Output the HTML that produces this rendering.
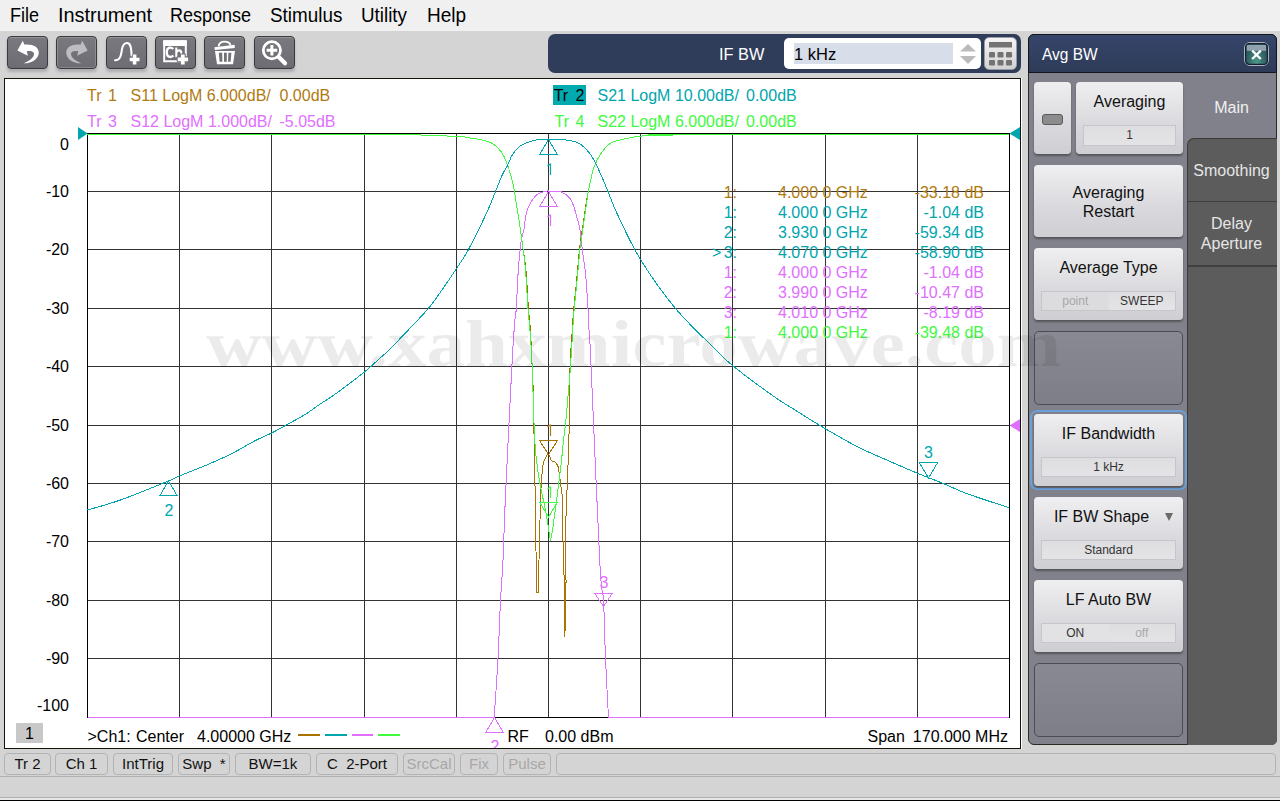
<!DOCTYPE html>
<html><head><meta charset="utf-8"><title>VNA</title>
<style>
*{margin:0;padding:0;box-sizing:border-box;}
html,body{width:1280px;height:801px;overflow:hidden;background:#d4d4d4;font-family:"Liberation Sans",sans-serif;}
.abs{position:absolute;}
#menu{left:0;top:0;width:1280px;height:31px;background:#f0f0f0;}
#menu span{position:absolute;top:4px;font-size:20px;color:#000;transform-origin:0 0;}
#tb{left:0;top:31px;width:1280px;height:47px;background:#d4d4d4;}
.tbtn{position:absolute;top:36px;width:41px;height:33px;border:1px solid #3a3a3e;border-radius:4px;background:linear-gradient(#7a797f,#6d6c72);box-shadow:0 3px 3px rgba(0,0,0,0.18);}
.tbtn svg{position:absolute;left:0;top:0;}
.tbtn{box-shadow:inset 0 1px 0 rgba(255,255,255,0.22), 0 3px 3px rgba(0,0,0,0.18);}
.tbtn.dis{box-shadow:inset 0 0 0 1px rgba(255,255,255,0.18), 0 3px 3px rgba(0,0,0,0.18);}
#ifbw{left:548px;top:34px;width:473px;height:39px;background:#2f3d5b;border-radius:7px;}
#ifbwlbl{left:719px;top:45px;font-size:17px;color:#fff;transform-origin:0 0;transform:scaleX(0.96);}
#ifinput{left:784px;top:38px;width:197px;height:31px;background:#fff;border-radius:5px;}
#ifsel{left:794px;top:43px;width:159px;height:21px;background:#d8dee9;}
#iftxt{left:794px;top:45px;font-size:17px;color:#000;transform-origin:0 0;transform:scaleX(0.97);}
#keypad{left:984px;top:37px;width:33px;height:33px;border-radius:5px;background:linear-gradient(#f4f4f4,#d2d2d4);border:1px solid #9a9aa2;}
#panel{left:4px;top:78px;width:1017px;height:671px;background:#fff;border:1px solid #14140a;box-shadow:1px 0 0 #fff;}
#chart{position:absolute;left:0;top:0;}
#rp{left:1028px;top:34px;width:249px;height:711px;background:#81818b;border:1px solid #2a2a22;border-radius:6px;overflow:hidden;}
#rphead{left:1028px;top:34px;width:249px;height:39px;background:linear-gradient(#36456a,#2e3b58);border:1px solid #15161c;border-radius:6px 6px 0 0;}
#rptitle{left:1042px;top:45px;font-size:17px;color:#fff;transform-origin:0 0;transform:scaleX(0.91);}
#closeb{left:1244px;top:42px;width:25px;height:24px;border:1px solid #aab3c2;border-radius:6px;background:radial-gradient(ellipse at 50% 90%,#4f9a88 0%,#2f6264 55%,#27485a 100%);}
#tabcol{left:1187px;top:138px;width:90px;height:607px;background:#5c5c5c;border-left:1px solid #3b3b35;border-top:1px solid #3b3b35;border-radius:7px 0 5px 0;}
.tab{position:absolute;left:1187px;width:89px;color:#e6e6e6;font-size:16px;text-align:center;}
.sk{position:absolute;left:1034px;width:149px;height:72px;border-radius:4px;background:linear-gradient(#efeff1,#d9d9dd 60%,#cfcfd3);box-shadow:0 2px 2px rgba(0,0,0,0.35);}
.sk .t{position:absolute;left:0;width:100%;top:11px;font-size:16px;text-align:center;color:#111;}
.sk .v{position:absolute;left:7px;top:43px;width:135px;height:20px;border:1px solid #c6c6ca;background:linear-gradient(#dedee0,#e4e4e6);font-size:12px;text-align:center;line-height:19px;color:#333;}
.empty{position:absolute;left:1034px;width:149px;height:74px;border:1px solid #4c4c50;border-radius:5px;background:linear-gradient(#898993,#7e7e88);}
#status .sb{position:absolute;top:753px;height:22px;border:1px solid #b3b3b3;border-radius:4px;font-size:15px;text-align:center;line-height:20px;color:#111;}
#status .dis{color:#a8a8a8;}
#wm{left:206px;top:306px;font-family:"Liberation Serif",serif;font-weight:bold;font-size:66px;color:rgba(0,0,0,0.08);letter-spacing:0px;white-space:nowrap;pointer-events:none;transform-origin:0 0;transform:scaleX(1.168);}
</style></head>
<body>
<div id="menu" class="abs">
<span style="left:10px;transform:scaleX(0.9)">File</span><span style="left:58px;transform:scaleX(0.995)">Instrument</span><span style="left:170.3px;transform:scaleX(0.9)">Response</span><span style="left:270.3px;transform:scaleX(0.943)">Stimulus</span><span style="left:361px;transform:scaleX(0.94)">Utility</span><span style="left:426.5px;transform:scaleX(0.95)">Help</span>
</div>
<div id="tb" class="abs"></div>
<div class="tbtn" style="left:7px"><svg width="39" height="31" viewBox="0 0 39 31"><path d="M14.8,3.8 L9.4,13.4 L19.8,18.8 L18.8,14.3 C23,13.2 26.5,14.5 26,17.5 C25.5,21 21,24.5 15.4,26.2 C21,27.2 30.8,23 30.8,15.5 C30.8,9.5 24,6.5 16.3,7.6 Z" fill="#fff"/></svg></div>
<div class="tbtn dis" style="left:56px"><svg width="39" height="31" viewBox="0 0 39 31"><g transform="translate(40,0) scale(-1,1)"><path d="M14.8,3.8 L9.4,13.4 L19.8,18.8 L18.8,14.3 C23,13.2 26.5,14.5 26,17.5 C25.5,21 21,24.5 15.4,26.2 C21,27.2 30.8,23 30.8,15.5 C30.8,9.5 24,6.5 16.3,7.6 Z" fill="#bdbdc0"/></g></svg></div>
<div class="tbtn" style="left:106px"><svg width="39" height="31" viewBox="0 0 39 31"><path d="M8,23.2 C13,23.5 14,19 15,12 C16,7 17.5,6 20,6 C23,6 24.3,9 24.6,18.5" fill="none" stroke="#fff" stroke-width="2" stroke-linecap="round"/><path d="M27.6,17.4 v10.2 M22.5,22.5 h10.2" stroke="#727177" stroke-width="5.5"/><path d="M27.6,17.6 v9.8 M22.7,22.5 h9.8" stroke="#fff" stroke-width="3.6"/></svg></div>
<div class="tbtn" style="left:155px"><svg width="39" height="31" viewBox="0 0 39 31"><rect x="8.2" y="4.3" width="21.6" height="19.95" fill="none" stroke="#fff" stroke-width="2"/><rect x="7.2" y="3.3" width="23.6" height="5.8" rx="0.8" fill="#fff"/><path d="M17.2,12 C16.5,11 15.5,10.6 14.4,10.6 C12,10.6 10.8,12.6 10.8,15.3 C10.8,18.2 12.2,20 14.5,20 C15.6,20 16.6,19.5 17.4,18.6" fill="none" stroke="#fff" stroke-width="2.3"/><path d="M20.3,10.4 v9.8 M20.3,15.5 C21,13.8 22.2,13.4 23.2,13.4 C24.6,13.4 25.3,14.4 25.3,16 v4.2" fill="none" stroke="#fff" stroke-width="2.1"/><path d="M26.8,16.4 v12.2 M20.8,22.3 h12.2" stroke="#727177" stroke-width="6"/><path d="M26.8,17.4 v10.2 M21.7,22.3 h10.4" stroke="#fff" stroke-width="3.8"/></svg></div>
<div class="tbtn" style="left:204px"><svg width="39" height="31" viewBox="0 0 39 31"><path d="M13.6,9.4 C14,5.5 17,4.6 19.5,4.6 C22.5,4.6 24.8,5.8 25.4,8" fill="none" stroke="#fff" stroke-width="1.9"/><path d="M9.4,10.2 L29.6,7.7 L29.9,10.9 L9.8,13.1 Z" fill="#fff"/><path d="M10,14 h20 l-2,13.2 h-16 z" fill="#fff"/><path d="M13.8,15.8 h3.4 l0.2,9 h-2.8 z M19,15.8 h2.8 v9 h-2.8 z M23.4,15.8 h3 l-0.8,9 h-2.6 z" fill="#727177"/></svg></div>
<div class="tbtn" style="left:254px"><svg width="39" height="31" viewBox="0 0 39 31"><circle cx="16.9" cy="13.3" r="8.6" fill="none" stroke="#fff" stroke-width="2.8"/><path d="M16.9,8 v10.6 M11.6,13.3 h10.6" stroke="#fff" stroke-width="3"/><path d="M24,20.3 L30,26.3" stroke="#fff" stroke-width="4.2" stroke-linecap="round"/></svg></div>

<div id="ifbw" class="abs"></div>
<div id="ifbwlbl" class="abs">IF BW</div>
<div id="ifinput" class="abs"></div>
<div id="ifsel" class="abs"></div>
<div id="iftxt" class="abs">1 kHz</div>
<svg class="abs" style="left:955px;top:40px" width="26" height="28"><polygon points="5,11.5 13,4 21,11.5" fill="#bbb"/><polygon points="5,16 13,24 21,16" fill="#bbb"/></svg>
<div id="keypad" class="abs"><svg width="31" height="31" viewBox="0 0 31 31"><rect x="4" y="4" width="23" height="5.5" fill="#737373"/><rect x="4" y="14" width="6" height="5.5" rx="1.2" fill="#737373"/><rect x="12.5" y="14" width="6" height="5.5" rx="1.2" fill="#737373"/><rect x="21" y="14" width="6" height="5.5" rx="1.2" fill="#737373"/><rect x="4" y="22" width="6" height="5.5" rx="1.2" fill="#737373"/><rect x="12.5" y="22" width="6" height="5.5" rx="1.2" fill="#737373"/><rect x="21" y="22" width="6" height="5.5" rx="1.2" fill="#737373"/></svg></div>

<div id="panel" class="abs"></div>
<svg id="chart" width="1280" height="801" viewBox="0 0 1280 801"><defs><clipPath id="pc"><rect x="5" y="79" width="1015" height="669"/></clipPath></defs><g clip-path="url(#pc)">
<g stroke="#333" stroke-width="1" shape-rendering="crispEdges"><line x1="179.5" y1="133" x2="179.5" y2="718" /><line x1="271.5" y1="133" x2="271.5" y2="718" /><line x1="364.5" y1="133" x2="364.5" y2="718" /><line x1="456.5" y1="133" x2="456.5" y2="718" /><line x1="548.5" y1="133" x2="548.5" y2="718" /><line x1="640.5" y1="133" x2="640.5" y2="718" /><line x1="732.5" y1="133" x2="732.5" y2="718" /><line x1="825.5" y1="133" x2="825.5" y2="718" /><line x1="917.5" y1="133" x2="917.5" y2="718" /><line x1="87" y1="191.5" x2="1010" y2="191.5" /><line x1="87" y1="249.5" x2="1010" y2="249.5" /><line x1="87" y1="308.5" x2="1010" y2="308.5" /><line x1="87" y1="366.5" x2="1010" y2="366.5" /><line x1="87" y1="425.5" x2="1010" y2="425.5" /><line x1="87" y1="483.5" x2="1010" y2="483.5" /><line x1="87" y1="541.5" x2="1010" y2="541.5" /><line x1="87" y1="600.5" x2="1010" y2="600.5" /><line x1="87" y1="658.5" x2="1010" y2="658.5" /></g>
<rect x="87.5" y="133.5" width="922" height="584" fill="none" stroke="#000" stroke-width="1" shape-rendering="crispEdges"/>
<g font-family="Liberation Sans, sans-serif" font-size="16" fill="#000"><text x="69" y="149.5" text-anchor="end">0</text><text x="69" y="197" text-anchor="end">-10</text><text x="69" y="255" text-anchor="end">-20</text><text x="69" y="314" text-anchor="end">-30</text><text x="69" y="372" text-anchor="end">-40</text><text x="69" y="431" text-anchor="end">-50</text><text x="69" y="489" text-anchor="end">-60</text><text x="69" y="547" text-anchor="end">-70</text><text x="69" y="606" text-anchor="end">-80</text><text x="69" y="664" text-anchor="end">-90</text><text x="69" y="710.5" text-anchor="end">-100</text></g>
<g fill="none" stroke-width="1" stroke-linejoin="miter" shape-rendering="crispEdges">
<path d="M87.50,717.50 C155.28,717.50 426.42,717.50 494.20,717.50 C494.83,707.67 496.95,678.00 498.00,658.50 C499.05,639.00 499.67,616.83 500.50,600.50 C501.33,584.17 502.17,578.00 503.00,560.50 C503.83,543.00 503.97,528.83 505.50,495.50 C507.03,462.17 510.57,390.50 512.20,360.50 C513.83,330.50 514.62,324.17 515.30,315.50 C515.98,306.83 515.82,315.83 516.30,308.50 C516.78,301.17 517.55,281.33 518.20,271.50 C518.85,261.67 519.65,254.90 520.20,249.50 C520.75,244.10 520.88,242.47 521.50,239.10 C522.12,235.73 523.10,233.63 523.90,229.30 C524.70,224.97 525.37,217.15 526.30,213.10 C527.23,209.05 527.87,207.98 529.50,205.00 C531.13,202.02 533.65,197.45 536.10,195.20 C538.55,192.95 542.13,192.20 544.20,191.50 C546.27,190.80 547.12,191.00 548.50,191.00 C549.88,191.00 550.33,191.33 552.50,191.50 C554.67,191.67 558.58,190.83 561.50,192.00 C564.42,193.17 568.02,196.25 570.00,198.50 C571.98,200.75 572.33,202.67 573.40,205.50 C574.47,208.33 575.32,211.50 576.40,215.50 C577.48,219.50 578.92,223.83 579.90,229.50 C580.88,235.17 581.37,242.17 582.30,249.50 C583.23,256.83 584.55,263.67 585.50,273.50 C586.45,283.33 587.37,298.17 588.00,308.50 C588.63,318.83 588.83,326.83 589.30,335.50 C589.77,344.17 589.05,322.67 590.80,360.50 C592.55,398.33 597.68,522.50 599.80,562.50 C601.92,602.50 602.55,584.50 603.50,600.50 C604.45,616.50 604.67,639.00 605.50,658.50 C606.33,678.00 608.00,707.67 608.50,717.50 C675.25,717.50 942.25,717.50 1009.00,717.50" stroke="#df6fff"/>
<path d="M87.50,134.50 C136.33,134.50 319.00,134.17 380.50,134.50 C442.00,134.83 441.33,135.88 456.50,136.50 C471.67,137.12 467.00,137.57 471.50,138.20 C476.00,138.83 479.92,139.37 483.50,140.30 C487.08,141.23 490.00,141.82 493.00,143.80 C496.00,145.78 499.08,148.68 501.50,152.20 C503.92,155.72 505.52,159.35 507.50,164.90 C509.48,170.45 511.90,178.82 513.40,185.50 C514.90,192.18 515.42,198.23 516.50,205.00 C517.58,211.77 518.80,218.68 519.90,226.10 C521.00,233.52 522.09,242.20 523.10,249.50 C524.11,256.80 525.06,260.07 525.95,269.90 C526.84,279.73 527.70,298.40 528.45,308.50 C529.20,318.60 529.83,320.83 530.45,330.50 C531.07,340.17 531.63,354.83 532.15,366.50 C532.67,378.17 533.23,388.17 533.55,400.50 C533.88,412.83 533.88,427.17 534.10,440.50 C534.33,453.83 534.67,468.83 534.90,480.50 C535.13,492.17 535.32,498.83 535.50,510.50 C535.68,522.17 535.83,536.83 536.00,550.50 C536.17,564.17 536.42,585.50 536.50,592.50 C536.92,592.50 538.58,592.50 539.00,592.50 C539.00,587.17 538.83,572.50 539.00,560.50 C539.17,548.50 539.75,530.50 540.00,520.50 C540.25,510.50 540.25,507.17 540.50,500.50 C540.75,493.83 541.08,486.33 541.50,480.50 C541.92,474.67 542.33,469.33 543.00,465.50 C543.67,461.67 544.58,459.33 545.50,457.50 C546.42,455.67 547.50,454.00 548.50,454.50 C549.50,455.00 550.33,459.17 551.50,460.50 C552.67,461.83 554.42,461.50 555.50,462.50 C556.58,463.50 557.33,464.33 558.00,466.50 C558.67,468.67 558.92,471.50 559.50,475.50 C560.08,479.50 561.00,486.33 561.50,490.50 C562.00,494.67 562.25,492.17 562.50,500.50 C562.75,508.83 562.72,526.83 563.00,540.50 C563.28,554.17 563.88,566.50 564.20,582.50 C564.52,598.50 564.78,627.50 564.90,636.50 C565.08,627.50 565.90,598.50 566.00,582.50 C566.10,566.50 565.42,554.17 565.50,540.50 C565.58,526.83 566.17,510.50 566.50,500.50 C566.83,490.50 567.17,488.83 567.50,480.50 C567.83,472.17 568.17,461.33 568.50,450.50 C568.83,439.67 569.24,429.50 569.50,415.50 C569.76,401.50 569.59,380.67 570.05,366.50 C570.51,352.33 571.63,340.17 572.25,330.50 C572.87,320.83 573.12,315.83 573.75,308.50 C574.38,301.17 575.10,296.33 576.05,286.50 C577.00,276.67 578.62,257.58 579.45,249.50 C580.28,241.42 579.98,245.33 581.05,238.00 C582.12,230.67 584.64,213.25 585.85,205.50 C587.06,197.75 586.96,197.83 588.30,191.50 C589.64,185.17 591.78,173.83 593.90,167.50 C596.02,161.17 598.18,157.57 601.00,153.50 C603.82,149.43 606.82,145.53 610.80,143.10 C614.78,140.67 619.73,140.08 624.90,138.90 C630.07,137.72 633.95,136.63 641.80,136.00 C649.65,135.37 666.88,135.35 672.00,135.10 C677.12,134.85 616.33,134.60 672.50,134.50 C728.67,134.40 952.92,134.50 1009.00,134.50" stroke="#a97300"/>
<path d="M87.50,134.50 C136.33,134.50 319.00,134.17 380.50,134.50 C442.00,134.83 441.33,135.88 456.50,136.50 C471.67,137.12 467.00,137.57 471.50,138.20 C476.00,138.83 479.92,139.37 483.50,140.30 C487.08,141.23 490.00,141.82 493.00,143.80 C496.00,145.78 499.08,148.68 501.50,152.20 C503.92,155.72 505.52,159.35 507.50,164.90 C509.48,170.45 511.90,178.82 513.40,185.50 C514.90,192.18 515.42,198.23 516.50,205.00 C517.58,211.77 518.80,218.68 519.90,226.10 C521.00,233.52 522.17,242.20 523.10,249.50 C524.03,256.80 524.68,260.07 525.50,269.90 C526.32,279.73 527.25,298.40 528.00,308.50 C528.75,318.60 529.30,320.83 530.00,330.50 C530.70,340.17 531.55,351.50 532.20,366.50 C532.85,381.50 533.35,406.50 533.90,420.50 C534.45,434.50 534.82,442.00 535.50,450.50 C536.18,459.00 537.17,465.50 538.00,471.50 C538.83,477.50 539.25,480.00 540.50,486.50 C541.75,493.00 544.17,503.50 545.50,510.50 C546.83,517.50 547.67,523.50 548.50,528.50 C549.33,533.50 550.17,538.50 550.50,540.50 C550.83,538.83 551.83,534.67 552.50,530.50 C553.17,526.33 553.83,520.50 554.50,515.50 C555.17,510.50 555.83,505.50 556.50,500.50 C557.17,495.50 557.67,492.17 558.50,485.50 C559.33,478.83 560.67,468.00 561.50,460.50 C562.33,453.00 562.77,447.17 563.50,440.50 C564.23,433.83 565.07,428.83 565.90,420.50 C566.73,412.17 567.73,399.50 568.50,390.50 C569.27,381.50 569.80,376.50 570.50,366.50 C571.20,356.50 572.08,340.17 572.70,330.50 C573.32,320.83 573.57,315.83 574.20,308.50 C574.83,301.17 575.55,296.33 576.50,286.50 C577.45,276.67 579.07,257.58 579.90,249.50 C580.73,241.42 580.43,245.33 581.50,238.00 C582.57,230.67 585.17,213.25 586.30,205.50 C587.43,197.75 587.03,197.83 588.30,191.50 C589.57,185.17 591.78,173.83 593.90,167.50 C596.02,161.17 598.18,157.57 601.00,153.50 C603.82,149.43 606.82,145.53 610.80,143.10 C614.78,140.67 619.73,140.08 624.90,138.90 C630.07,137.72 633.95,136.63 641.80,136.00 C649.65,135.37 666.88,135.35 672.00,135.10 C677.12,134.85 616.33,134.60 672.50,134.50 C728.67,134.40 952.92,134.50 1009.00,134.50" stroke="#40fa40"/>
<path d="M87.50,510.00 C93.00,508.33 107.00,504.83 120.50,500.00 C134.00,495.17 158.50,485.08 168.50,481.00 C178.50,476.92 174.33,478.08 180.50,475.50 C186.67,472.92 197.17,469.04 205.50,465.50 C213.83,461.96 222.17,458.42 230.50,454.25 C238.83,450.08 248.62,444.04 255.50,440.50 C262.38,436.96 266.75,435.50 271.75,433.00 C276.75,430.50 279.88,428.62 285.50,425.50 C291.12,422.38 300.08,417.58 305.50,414.25 C310.92,410.92 312.79,409.04 318.00,405.50 C323.21,401.96 328.92,398.67 336.75,393.00 C344.58,387.33 357.88,377.25 365.00,371.50 C372.12,365.75 375.75,361.83 379.50,358.50 C383.25,355.17 382.83,356.10 387.50,351.50 C392.17,346.90 400.77,337.98 407.50,330.90 C414.23,323.82 422.62,315.17 427.90,309.00 C433.18,302.83 434.43,300.65 439.20,293.90 C443.97,287.15 451.62,275.90 456.50,268.50 C461.38,261.10 463.42,258.90 468.50,249.50 C473.58,240.10 482.50,221.77 487.00,212.10 C491.50,202.43 492.92,197.77 495.50,191.50 C498.08,185.23 500.50,178.83 502.50,174.50 C504.50,170.17 505.83,168.83 507.50,165.50 C509.17,162.17 510.50,157.67 512.50,154.50 C514.50,151.33 516.83,148.57 519.50,146.50 C522.17,144.43 525.67,143.18 528.50,142.10 C531.33,141.02 533.17,140.43 536.50,140.00 C539.83,139.57 543.67,139.50 548.50,139.50 C553.33,139.50 560.67,139.50 565.50,140.00 C570.33,140.50 574.17,141.08 577.50,142.50 C580.83,143.92 583.00,146.00 585.50,148.50 C588.00,151.00 590.17,153.67 592.50,157.50 C594.83,161.33 596.92,165.83 599.50,171.50 C602.08,177.17 605.00,184.33 608.00,191.50 C611.00,198.67 612.08,203.17 617.50,214.50 C622.92,225.83 630.83,243.83 640.50,259.50 C650.17,275.17 663.00,293.50 675.50,308.50 C688.00,323.50 706.00,340.00 715.50,349.50 C725.00,359.00 723.00,357.83 732.50,365.50 C742.00,373.17 761.42,387.67 772.50,395.50 C783.58,403.33 791.10,407.50 799.00,412.50 C806.90,417.50 810.17,419.79 819.90,425.50 C829.63,431.21 845.95,440.87 857.40,446.75 C868.85,452.63 878.58,456.38 888.60,460.80 C898.62,465.23 908.38,469.52 917.50,473.30 C926.62,477.08 935.09,480.12 943.30,483.50 C951.51,486.88 955.82,489.57 966.75,493.60 C977.68,497.63 1001.88,505.35 1008.90,507.70" stroke="#00a5ad"/>
</g>
<g fill="none" stroke-width="1" shape-rendering="crispEdges">
<polygon points="168.5,481.0 159.75,495.8 177.25,495.8" stroke="#00a5ad"/>
<polygon points="548.5,139.5 539.75,154.3 557.25,154.3" stroke="#00a5ad"/>
<polygon points="928.5,478.0 919.0,462.0 938.0,462.0" stroke="#00a5ad"/>
<polygon points="548.5,191.5 539.75,206.3 557.25,206.3" stroke="#df6fff"/>
<polygon points="603.5,606.5 594.5,593.0 612.5,593.0" stroke="#df6fff"/>
<polygon points="494.5,717.5 485.75,732.3 503.25,732.3" stroke="#df6fff"/>
<polygon points="548.5,454.5 539.5,440.5 557.5,440.5" stroke="#a97300"/>
<polygon points="548.5,517.0 539.5,502.0 557.5,502.0" stroke="#40fa40"/>
</g>
<polygon points="78,127 87.5,133.5 78,140" fill="#00a5ad"/>
<polygon points="1020,127 1009.5,133.5 1020,140" fill="#00a5ad"/>
<polygon points="1020,419 1009.5,425.5 1020,432" fill="#df6fff"/>
<g font-family="Liberation Sans, sans-serif" font-size="16">
<text x="169" y="515.5" text-anchor="middle" fill="#00a5ad">2</text>
<path d="M550.5,163.5 V175 M547.5,166.0 L550.5,163.8" stroke="#00a5ad" stroke-width="1.2" fill="none"/>
<text x="928.5" y="458" text-anchor="middle" fill="#00a5ad">3</text>
<path d="M550.5,214.5 V226 M547.5,217.0 L550.5,214.8" stroke="#df6fff" stroke-width="1.2" fill="none"/>
<text x="604" y="588" text-anchor="middle" fill="#df6fff">3</text>
<text x="495" y="752" text-anchor="middle" fill="#df6fff">2</text>
<path d="M550.5,424.5 V436 M547.5,427.0 L550.5,424.8" stroke="#b07a10" stroke-width="1.2" fill="none"/>
<path d="M550.5,486.5 V498 M547.5,489.0 L550.5,486.8" stroke="#40fa40" stroke-width="1.2" fill="none"/>
</g>
<g font-family="Liberation Sans, sans-serif" font-size="16"><text x="737" y="197.5" text-anchor="end" fill="#b07a10">1:</text><text x="778" y="197.5" fill="#b07a10">4.000 0 GHz</text><text x="984" y="197.5" text-anchor="end" fill="#b07a10">-33.18 dB</text><text x="737" y="217.5" text-anchor="end" fill="#00a5ad">1:</text><text x="778" y="217.5" fill="#00a5ad">4.000 0 GHz</text><text x="984" y="217.5" text-anchor="end" fill="#00a5ad">-1.04 dB</text><text x="737" y="237.5" text-anchor="end" fill="#00a5ad">2:</text><text x="778" y="237.5" fill="#00a5ad">3.930 0 GHz</text><text x="984" y="237.5" text-anchor="end" fill="#00a5ad">-59.34 dB</text><text x="737" y="257.5" text-anchor="end" fill="#00a5ad">3:</text><text x="778" y="257.5" fill="#00a5ad">4.070 0 GHz</text><text x="984" y="257.5" text-anchor="end" fill="#00a5ad">-58.90 dB</text><text x="737" y="277.5" text-anchor="end" fill="#df6fff">1:</text><text x="778" y="277.5" fill="#df6fff">4.000 0 GHz</text><text x="984" y="277.5" text-anchor="end" fill="#df6fff">-1.04 dB</text><text x="737" y="297.5" text-anchor="end" fill="#df6fff">2:</text><text x="778" y="297.5" fill="#df6fff">3.990 0 GHz</text><text x="984" y="297.5" text-anchor="end" fill="#df6fff">-10.47 dB</text><text x="737" y="317.5" text-anchor="end" fill="#df6fff">3:</text><text x="778" y="317.5" fill="#df6fff">4.010 0 GHz</text><text x="984" y="317.5" text-anchor="end" fill="#df6fff">-8.19 dB</text><text x="737" y="337.5" text-anchor="end" fill="#40fa40">1:</text><text x="778" y="337.5" fill="#40fa40">4.000 0 GHz</text><text x="984" y="337.5" text-anchor="end" fill="#40fa40">-39.48 dB</text><text x="712" y="257.5" fill="#00a5ad">&gt;</text></g>
<g font-family="Liberation Sans, sans-serif" font-size="16">
<text x="87" y="101" fill="#b07a10">Tr</text><text x="108" y="101" fill="#b07a10">1</text><text x="130.5" y="101" fill="#b07a10">S11 LogM 6.000dB/</text><text x="279.5" y="101" fill="#b07a10">0.00dB</text>
<text x="87" y="127" fill="#df6fff">Tr</text><text x="108" y="127" fill="#df6fff">3</text><text x="130.5" y="127" fill="#df6fff">S12 LogM 1.000dB/</text><text x="279.5" y="127" fill="#df6fff">-5.05dB</text>
<rect x="553" y="85" width="33" height="20" fill="#00aaae"/>
<text x="553.7" y="101" fill="#000">Tr</text><text x="575.5" y="101" fill="#000">2</text><text x="597.5" y="101" fill="#00a5ad">S21 LogM 10.00dB/</text><text x="746" y="101" fill="#00a5ad">0.00dB</text>
<text x="554.5" y="127" fill="#40fa40">Tr</text><text x="575.5" y="127" fill="#40fa40">4</text><text x="597.5" y="127" fill="#40fa40">S22 LogM 6.000dB/</text><text x="746" y="127" fill="#40fa40">0.00dB</text>
<rect x="16" y="723" width="27" height="20" fill="#c8c8c8"/>
<text x="29.5" y="739" text-anchor="middle" fill="#000">1</text>
<text x="87.5" y="741.5" fill="#000">&gt;Ch1:</text><text x="136" y="741.5" fill="#000">Center</text><text x="197" y="741.5" fill="#000">4.00000 GHz</text>
<text x="507.5" y="741.5" fill="#000">RF</text><text x="545" y="741.5" fill="#000">0.00 dBm</text>
<text x="867.5" y="742" fill="#000">Span</text><text x="1008" y="742" text-anchor="end" fill="#000">170.000 MHz</text>
</g>
<g stroke-width="2">
<line x1="298" y1="735" x2="320" y2="735" stroke="#a97300"/>
<line x1="325" y1="735" x2="347" y2="735" stroke="#00a5ad"/>
<line x1="352" y1="735" x2="373" y2="735" stroke="#df6fff"/>
<line x1="378" y1="735" x2="400" y2="735" stroke="#40fa40"/>
</g>
</g></svg>

<div id="rp" class="abs"></div>
<div id="tabcol" class="abs"></div>
<div class="tab" style="top:99px;color:#f0f0f0">Main</div>
<div class="abs" style="left:1187px;top:201px;width:90px;height:1px;background:#3e3e3a"></div>
<div class="abs" style="left:1187px;top:265px;width:90px;height:2px;background:#404040"></div>
<div class="tab" style="top:162px">Smoothing</div>
<div class="tab" style="top:214px;line-height:20px">Delay<br>Aperture</div>
<div id="rphead" class="abs"></div>
<div id="rptitle" class="abs">Avg BW</div>
<div id="closeb" class="abs"><svg width="23" height="22" viewBox="0 0 23 22"><rect x="0.6" y="0.6" width="21.8" height="20.8" rx="4" fill="none" stroke="#15202c" stroke-width="1.2"/><rect x="1.8" y="2" width="19.2" height="5.8" fill="#8fa2ae"/><path d="M7.2,7.6 L15.8,16 M15.8,7.6 L7.2,16" stroke="#fff" stroke-width="2.3"/></svg></div>

<div class="sk" style="left:1034px;top:82px;width:37px"><div style="position:absolute;left:8px;top:32px;width:21px;height:11px;border:1px solid #5a5a5a;border-radius:3px;background:#8c8c8c"></div></div>
<div class="sk" style="left:1076px;top:82px;width:107px"><div class="t">Averaging</div><div class="v" style="width:93px;height:21px">1</div></div>
<div class="sk" style="top:165px"><div class="t" style="top:18px;line-height:19px">Averaging<br>Restart</div></div>
<div class="sk" style="top:248px"><div class="t">Average Type</div><div class="v" style="display:flex;padding:0"><span style="flex:1;color:#a8a8a8;background:#dcdcde">point</span><span style="flex:1;color:#333">SWEEP</span></div></div>
<div class="empty" style="top:331px"></div>
<div class="abs" style="left:1030px;top:410px;width:157px;height:80px;border:2px solid #6a9fd8;border-radius:7px"></div>
<div class="sk" style="top:414px"><div class="t">IF Bandwidth</div><div class="v">1 kHz</div></div>
<div class="sk" style="top:497px"><div class="t" style="padding-right:14px">IF BW Shape</div><div class="abs" style="left:131px;top:16px;width:0;height:0;border-left:4.5px solid transparent;border-right:4.5px solid transparent;border-top:8px solid #6a6a6a"></div><div class="v">Standard</div></div>
<div class="sk" style="top:580px"><div class="t">LF Auto BW</div><div class="v" style="display:flex;padding:0"><span style="flex:1;color:#333;background:#e2e2e4">ON</span><span style="flex:1;color:#a8a8a8">off</span></div></div>
<div class="empty" style="top:663px"></div>

<div id="status">
<div class="sb" style="left:4px;width:47px">Tr 2</div>
<div class="sb" style="left:55px;width:53px">Ch 1</div>
<div class="sb" style="left:113px;width:60px">IntTrig</div>
<div class="sb" style="left:178px;width:52px">Swp&nbsp; *</div>
<div class="sb" style="left:235px;width:76px">BW=1k</div>
<div class="sb" style="left:316px;width:82px">C&nbsp; 2-Port</div>
<div class="sb dis" style="left:403px;width:52px">SrcCal</div>
<div class="sb dis" style="left:460px;width:38px">Fix</div>
<div class="sb dis" style="left:503px;width:48px">Pulse</div>
<div class="sb" style="left:556px;width:720px"></div>
</div>
<div class="abs" style="left:0;top:776px;width:1280px;height:1px;background:#b0b0b0"></div>
<div class="abs" style="left:0;top:797px;width:1280px;height:1px;background:#b0b0b0"></div>
<div class="abs" style="left:0;top:798px;width:1280px;height:2px;background:#e6e6e6"></div>
<div class="abs" style="left:0;top:800px;width:1280px;height:1px;background:#000"></div>

<div id="wm" class="abs">www.xahxmicrowave.com</div>
</body></html>
